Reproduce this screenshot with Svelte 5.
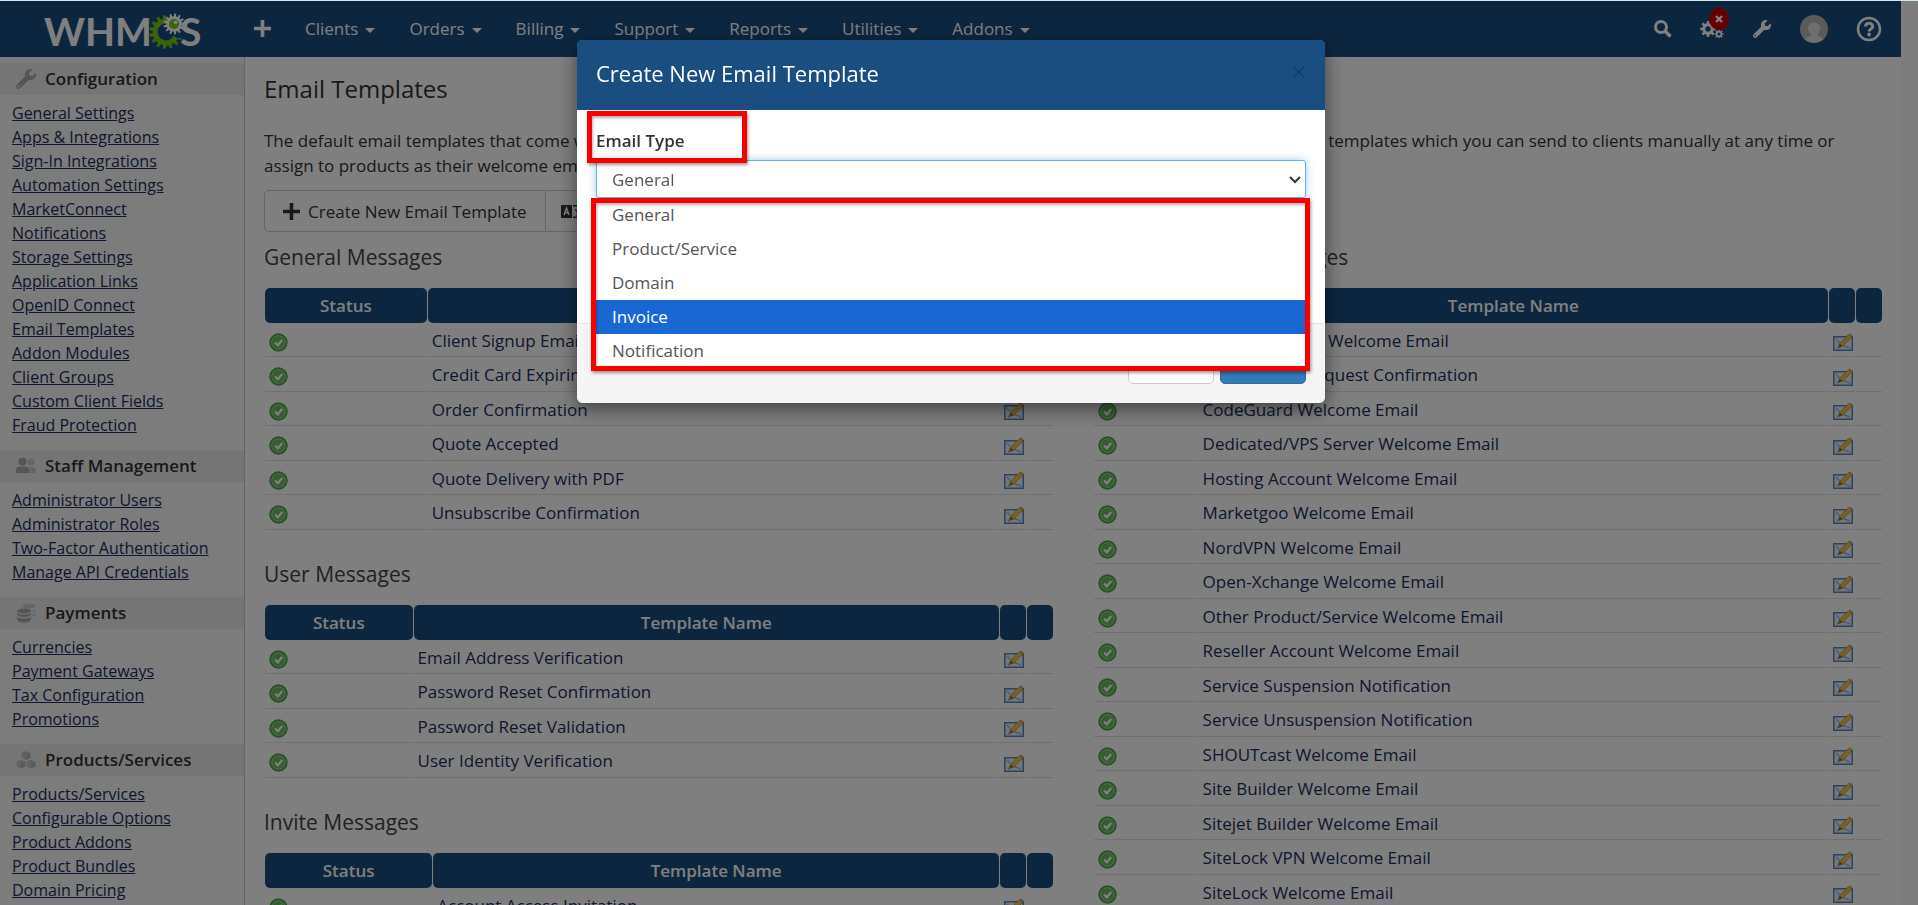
<script lang="ts">
  type IconName = 'wrench' | 'users' | 'coins' | 'cubes';

  const nav = ['Clients', 'Orders', 'Billing', 'Support', 'Reports', 'Utilities', 'Addons'];

  const sections: { title: string; icon: IconName; links: string[] }[] = [
    {
      title: 'Configuration',
      icon: 'wrench',
      links: [
        'General Settings',
        'Apps & Integrations',
        'Sign-In Integrations',
        'Automation Settings',
        'MarketConnect',
        'Notifications',
        'Storage Settings',
        'Application Links',
        'OpenID Connect',
        'Email Templates',
        'Addon Modules',
        'Client Groups',
        'Custom Client Fields',
        'Fraud Protection',
      ],
    },
    {
      title: 'Staff Management',
      icon: 'users',
      links: [
        'Administrator Users',
        'Administrator Roles',
        'Two-Factor Authentication',
        'Manage API Credentials',
      ],
    },
    {
      title: 'Payments',
      icon: 'coins',
      links: ['Currencies', 'Payment Gateways', 'Tax Configuration', 'Promotions'],
    },
    {
      title: 'Products/Services',
      icon: 'cubes',
      links: [
        'Products/Services',
        'Configurable Options',
        'Product Addons',
        'Product Bundles',
        'Domain Pricing',
      ],
    },
  ];

  // statusWidth is the share of the table taken by the status column
  const columns: { title: string; statusWidth: number; rows: string[] }[][] = [
    [
      {
        title: 'General Messages',
        statusWidth: 20.6,
        rows: [
          'Client Signup Email',
          'Credit Card Expiring Soon',
          'Order Confirmation',
          'Quote Accepted',
          'Quote Delivery with PDF',
          'Unsubscribe Confirmation',
        ],
      },
      {
        title: 'User Messages',
        statusWidth: 18.8,
        rows: [
          'Email Address Verification',
          'Password Reset Confirmation',
          'Password Reset Validation',
          'User Identity Verification',
        ],
      },
      {
        title: 'Invite Messages',
        statusWidth: 21.3,
        rows: ['Account Access Invitation', 'Admin Invitation'],
      },
    ],
    [
      {
        title: 'Product/Service Messages',
        statusWidth: 13.2,
        rows: [
          '360 Monitoring Welcome Email',
          'Cancellation Request Confirmation',
          'CodeGuard Welcome Email',
          'Dedicated/VPS Server Welcome Email',
          'Hosting Account Welcome Email',
          'Marketgoo Welcome Email',
          'NordVPN Welcome Email',
          'Open-Xchange Welcome Email',
          'Other Product/Service Welcome Email',
          'Reseller Account Welcome Email',
          'Service Suspension Notification',
          'Service Unsuspension Notification',
          'SHOUTcast Welcome Email',
          'Site Builder Welcome Email',
          'Sitejet Builder Welcome Email',
          'SiteLock VPN Welcome Email',
          'SiteLock Welcome Email',
        ],
      },
    ],
  ];

  const types = ['General', 'Product/Service', 'Domain', 'Invoice', 'Notification'];

  let selected = $state('General');
  let highlighted = $state('Invoice');

  const wrenchPath =
    'M507.7 109.1c-2.2-9-13.5-12.1-20.1-5.5l-74.4 74.4-67.9-11.3-11.3-67.9 74.4-74.4c6.6-6.6 3.4-17.9-5.7-20.2-47.4-11.7-99.6 .9-136.6 37.9-39.6 39.6-50.6 97.1-34.1 147.2L18.7 402.8c-25 25-25 65.5 0 90.5s65.5 25 90.5 0l213.2-213.2c50.1 16.7 107.5 5.7 147.4-34.2 37.1-37.1 49.7-89.3 37.9-136.8zM64 472c-13.3 0-24-10.8-24-24 0-13.3 10.7-24 24-24s24 10.7 24 24c0 13.2-10.7 24-24 24z';

  // outline of a gear centred on the origin
  function gear(teeth: number, outer: number, inner: number) {
    const step = (Math.PI * 2) / teeth;
    const points: string[] = [];
    for (let i = 0; i < teeth; i++) {
      for (const [offset, radius] of [[-0.3, inner], [-0.18, outer], [0.18, outer], [0.3, inner]]) {
        const angle = (i + offset) * step;
        points.push(`${(Math.cos(angle) * radius).toFixed(2)} ${(Math.sin(angle) * radius).toFixed(2)}`);
      }
    }
    return `M${points.join('L')}Z`;
  }
</script>

{#snippet plus()}
  <svg class="plus" viewBox="0 0 16 16" aria-hidden="true"><path d="M6.3 0h3.4v6.3H16v3.4H9.7V16H6.3V9.7H0V6.3h6.3z" /></svg>
{/snippet}

{#snippet sectionIcon(name: IconName)}
  {#if name === 'wrench'}
    <svg viewBox="0 0 512 512" aria-hidden="true"><path d={wrenchPath} /></svg>
  {:else if name === 'users'}
    <svg viewBox="0 0 20 18" aria-hidden="true">
      <g opacity="0.45">
        <circle cx="15" cy="5" r="3.5" />
        <path d="M12 16v-3q0-3 3-3h2q3 0 3 3v3z" />
      </g>
      <circle cx="6.5" cy="4.5" r="4" />
      <path d="M0 16v-3q0-3.500 3.500-3.500h6q3.500 0 3.500 3.500v3z" />
    </svg>
  {:else if name === 'coins'}
    <svg viewBox="0 0 20 20" aria-hidden="true">
      <g opacity="0.45">
        <ellipse cx="13" cy="3" rx="6.500" ry="2.500" />
        <path d="M16 8q3-.5 3.500-2v2q-.5 1.500-3.500 2zM16 12q3-.5 3.500-2v2q-.5 1.500-3.500 2z" />
      </g>
      <ellipse cx="8" cy="8" rx="7" ry="2.500" />
      <path d="M1 9.500q1 2 7 2t7-2v2q-1 2.500-7 2.500t-7-2.500zM1 13.500q1 2 7 2t7-2v3q-1 3-7 3t-7-3z" />
    </svg>
  {:else}
    <svg viewBox="0 0 20 20" aria-hidden="true">
      <g opacity="0.6">
        <path d="M10 1l4.500 2v5L10 10 5.500 8V3zM5 9.500l4.500 2v5L5 18.500l-4.500-2v-5zM15 9.500l4.500 2v5l-4.500 2-4.500-2v-5z" />
      </g>
      <path d="M10 5l4.500-2v5L10 10zM5 13.500l4.500-2v5L5 18.500zM15 13.500l4.500-2v5l-4.500 2z" opacity="0.5" />
    </svg>
  {/if}
{/snippet}

<div class="page">
  <header class="topbar">
    <a class="logo" href="#home" aria-label="WHMCS">
      <span>WHM</span>
      <svg viewBox="0 0 36 38" aria-hidden="true">
        <path class="green" fill-rule="evenodd" d="{gear(15, 16.8, 13.4)}M8.500 0a8.500 8.500 0 1 0-17 0a8.500 8.500 0 1 0 17 0z" transform="translate(18 20)" />
        <path class="bar" d="M24 12h12v14h-7l-6-4z" />
        <path class="light" d={gear(13, 10.5, 7.8)} transform="translate(26 12)" />
        <circle class="green" cx="26" cy="12" r="5" />
        <circle class="light" cx="27.500" cy="10.300" r="1.900" />
      </svg>
      <span class="last">S</span>
    </a>

    <nav>
      <a href="#add" aria-label="Add new">{@render plus()}</a>
      {#each nav as item}
        <a href="#{item.toLowerCase()}">{item}<i class="caret"></i></a>
      {/each}
    </nav>

    <div class="tools">
      <a href="#search" aria-label="Search">
        <svg width="18" height="18" viewBox="0 0 18 18"><circle cx="7" cy="7" r="5.500" fill="none" stroke="currentColor" stroke-width="3" /><path d="M11 11l5.500 5.500" stroke="currentColor" stroke-width="3.500" /></svg>
      </a>
      <a class="automation" href="#automation" aria-label="Automation status">
        <svg width="24" height="18" viewBox="0 0 24 18">
          <path fill-rule="evenodd" d="{gear(8, 8, 5.8)}M2.700 0a2.700 2.700 0 1 0-5.400 0a2.700 2.700 0 1 0 5.400 0z" transform="translate(8 9)" />
          <path fill-rule="evenodd" d="{gear(8, 4.6, 3.3)}M1.600 0a1.600 1.600 0 1 0-3.200 0a1.600 1.600 0 1 0 3.200 0z" transform="translate(19 14)" />
        </svg>
        <span class="badge"><svg width="8" height="8" viewBox="0 0 8 8"><path d="M1 1l6 6M7 1L1 7" stroke="currentColor" stroke-width="2.400" /></svg></span>
      </a>
      <a href="#setup" aria-label="Setup">
        <svg width="20" height="18" viewBox="0 0 512 512"><path d={wrenchPath} /></svg>
      </a>
      <a href="#account" aria-label="My account">
        <svg width="28" height="28" viewBox="0 0 28 28">
          <circle cx="14" cy="14" r="14" fill="#b5b5b5" />
          <path d="M14 7.500c4 0 6 3 6 6 0 3-1.500 5-3 6 0 2 5 2.500 6.500 4.500a14 14 0 0 1-19 0c1.500-2 6.500-2.500 6.500-4.500-1.500-1-3-3-3-6 0-3 2-6 6-6z" fill="#dedede" />
        </svg>
      </a>
      <a href="#help" aria-label="Help">
        <svg width="26" height="26" viewBox="0 0 26 26">
          <g fill="none" stroke="currentColor">
            <circle cx="13" cy="13" r="11" stroke-width="2.500" />
            <path d="M9.500 10.500c0-2 1.500-3.200 3.500-3.200s3.700 1.200 3.700 3.100c0 2.400-3.500 2.600-3.500 5" stroke-width="3" />
            <circle cx="13.100" cy="18.500" r="0.900" stroke-width="2" />
          </g>
        </svg>
      </a>
    </div>
  </header>

  <div class="columns">
    <aside>
      {#each sections as section}
        <section>
          <h2>{@render sectionIcon(section.icon)}{section.title}</h2>
          <ul>
            {#each section.links as link}
              <li><a href="#{link}">{link}</a></li>
            {/each}
          </ul>
        </section>
      {/each}
    </aside>

    <main>
      <h1>Email Templates</h1>
      <p>
        The default email templates that come with WHMCS are listed here and can be fully customised. You can also add your own additional templates which you can send to clients manually at any time or assign to products as their welcome email.
      </p>

      <div class="btn-group">
        <button type="button">{@render plus()}Create New Email Template</button>
        <button type="button">
          <svg width="24" height="13" viewBox="0 0 24 13" aria-hidden="true">
            <path d="M0 0h11v13H0z" />
            <path d="M3 10l2.500-7L8 10M4 7.800h3" fill="none" stroke="#fff" stroke-width="1.500" />
            <path d="M12 .8h11.200v11.400H12M17.500 2.500v2M14 5h7M15.500 10q4-2 4-5M15.500 6.500q1.500 2.500 4.500 3.500" fill="none" stroke="currentColor" stroke-width="1.500" />
          </svg>
          Manage Languages
        </button>
      </div>

      <div class="lists">
        {#each columns as groups}
          <div>
            {#each groups as group}
              <h3>{group.title}</h3>
              <table>
                <thead>
                  <tr>
                    <th style:width="{group.statusWidth}%">Status</th>
                    <th>Template Name</th>
                    <th class="action"></th>
                    <th class="action"></th>
                  </tr>
                </thead>
                <tbody>
                  {#each group.rows as row}
                    <tr>
                      <td>
                        <svg width="19" height="19" viewBox="0 0 19 19" role="img" aria-label="Active">
                          <circle cx="9.500" cy="9.500" r="9.200" fill="#4fa44a" />
                          <circle cx="9.500" cy="9.500" r="6.800" fill="#6dbb60" stroke="#a4dc98" />
                          <path d="M6 9.500l2.800 2.800L13.200 7" fill="none" stroke="#fff" stroke-width="2.200" />
                        </svg>
                      </td>
                      <td><a href="#{row}">{row}</a></td>
                      <td>
                        <a href="#edit" aria-label="Edit {row}">
                          <svg width="20" height="18" viewBox="0 0 20 18">
                            <rect x="0.750" y="3.750" width="18.500" height="13.500" fill="#e6eff8" stroke="#5687bd" stroke-width="1.500" />
                            <path d="M3 6l6 6-5 3M9 12l8 3" fill="none" stroke="#9db8d6" stroke-width="1.500" />
                            <path d="M5.500 14.500l1-4L15.500 1.500l3.500 2.500-9 9z" fill="#f2c14e" stroke="#b98a2d" stroke-width="0.700" />
                            <path d="M5.500 14.500l1-4 3 2.500z" fill="#8a6a3c" />
                            <path d="M15.500 1.500L17 .5l2.500 2-.5 1.500z" fill="#e39a6c" />
                          </svg>
                        </a>
                      </td>
                      <td></td>
                    </tr>
                  {/each}
                </tbody>
              </table>
            {/each}
          </div>
        {/each}
      </div>
    </main>
  </div>
</div>

<div class="scrollbar"></div>
<div class="backdrop"></div>

<div class="modal" role="dialog" aria-labelledby="modal-title">
  <div class="modal-header">
    <h4 id="modal-title">Create New Email Template</h4>
    <button type="button" class="close" aria-label="Close">×</button>
  </div>
  <div class="modal-body">
    <label for="email-type">Email Type</label>
    <div class="picker">
      <select id="email-type" bind:value={selected}>
        {#each types as type}
          <option>{type}</option>
        {/each}
      </select>
      <svg class="chevron" width="12" height="8" viewBox="0 0 12 8" aria-hidden="true"><path d="M1 1l5 5 5-5" /></svg>
      <ul class="options" role="listbox" aria-label="Email Type">
        {#each types as type}
          <li
            role="option"
            aria-selected={type === selected}
            class:active={type === highlighted}
            onmouseenter={() => (highlighted = type)}
          >
            {type}
          </li>
        {/each}
      </ul>
      <div class="mark mark-options"></div>
    </div>
    <div class="mark mark-label"></div>
  </div>
  <div class="modal-footer">
    <button type="button">Close</button>
    <button type="button" class="primary">Create</button>
  </div>
</div>

<style>
  :global(body) {
    height: 100vh;
    overflow: hidden;
    background: #fff;
    font-family: 'Open Sans', 'Liberation Sans', sans-serif;
    font-size: 17px;
    line-height: 25px;
    color: #333;
  }

  svg {
    display: block;
    fill: currentColor;
  }

  a {
    color: #202f60;
    text-decoration: none;
  }

  button {
    font: inherit;
    color: inherit;
  }

  ul {
    list-style: none;
    margin: 0;
    padding: 0;
  }

  .page {
    height: 100vh;
    box-sizing: border-box;
    margin-right: 17px;
    overflow: hidden;
    border-top: 1px solid #cfeaf3;
    display: flex;
    flex-direction: column;
  }

  .scrollbar {
    position: fixed;
    top: 0;
    right: 0;
    bottom: 0;
    width: 17px;
    background: #fafafa;
    border-top: 1px solid #cfeaf3;
  }

  .backdrop {
    position: fixed;
    inset: 1px 0 0;
    background: rgba(0, 0, 0, 0.5);
  }

  /* top bar */
  .topbar {
    flex: none;
    height: 56px;
    background: #1a4d80;
    display: flex;
    align-items: center;
  }

  .topbar a {
    color: #fff;
  }

  .logo {
    width: 211px;
    box-sizing: border-box;
    padding: 4px 0 0 44px;
    display: flex;
    align-items: center;
    font-family: Lato, sans-serif;
    font-size: 39px;
    font-weight: 700;
    line-height: 40px;
  }

  .logo svg {
    width: 36px;
    height: 38px;
    flex: none;
    margin-left: -4px;
  }

  .logo .last {
    margin-left: -4px;
  }

  .logo .green {
    fill: #77c41c;
  }

  .logo .bar {
    fill: #1a4d80;
  }

  .logo .light {
    fill: #fff;
  }

  nav {
    flex: 1;
    display: flex;
    align-items: center;
    gap: 34px;
    padding: 0 0 2px 43px;
  }

  nav a {
    display: flex;
    align-items: center;
    gap: 7px;
  }

  .plus {
    width: 17px;
    height: 17px;
  }

  .caret {
    border: 5px solid transparent;
    border-top-color: currentColor;
    border-bottom: 0;
    margin-top: 4px;
  }

  .tools {
    display: flex;
    align-items: center;
    gap: 28px;
    padding-right: 19px;
  }

  .automation {
    position: relative;
  }

  .badge {
    position: absolute;
    top: -12px;
    left: 9px;
    width: 20px;
    height: 22px;
    border-radius: 50%;
    background: #c00;
    display: grid;
    place-items: center;
  }

  .columns {
    flex: 1;
    min-height: 0;
    display: flex;
  }

  /* sidebar */
  aside {
    width: 244px;
    flex: none;
    padding-top: 6px;
    background: #f8f8f8;
    border-right: 1px solid #ccc;
    font-size: 16px;
    line-height: 24px;
  }

  section {
    margin-bottom: 18px;
  }

  section h2 {
    margin: 0;
    height: 32px;
    padding-left: 16px;
    background: #ebebeb;
    display: flex;
    align-items: center;
    gap: 9px;
    font-size: 17px;
    font-weight: 600;
  }

  section h2 svg {
    width: 20px;
    height: 20px;
    color: #aaa;
  }

  section ul {
    padding: 6px 12px 0;
    margin-bottom: -5px;
  }

  section a {
    text-decoration: underline;
  }

  /* content */
  main {
    flex: 1;
    min-width: 0;
    padding: 14px 18px 0 19px;
  }

  h1 {
    margin: 0 0 21px;
    font-size: 24px;
    line-height: 36px;
    font-weight: 400;
  }

  p {
    margin: 0 0 12px;
    padding-right: 24px;
  }

  .btn-group {
    display: flex;
  }

  .btn-group button {
    display: flex;
    align-items: center;
    gap: 8px;
    height: 42px;
    padding: 0 18px;
    border: 1px solid #ccc;
    background: #fff;
  }

  .btn-group button:first-child {
    border-radius: 5px 0 0 5px;
  }

  .btn-group button:last-child {
    border-left: 0;
    border-radius: 0 5px 5px 0;
    padding: 0 15px;
  }

  .lists {
    display: grid;
    grid-template-columns: 1fr 1fr;
    gap: 39px;
  }

  h3 {
    margin: 10px 0 16px;
    font-size: 21px;
    line-height: 30px;
    font-weight: 400;
    color: #444;
  }

  table {
    width: 100%;
    table-layout: fixed;
    border-collapse: separate;
    border-spacing: 1px 0;
    margin-bottom: 29px;
  }

  th {
    height: 35px;
    padding: 0;
    background: #1a4d80;
    border-radius: 5px;
    color: #fff;
    font-weight: 600;
  }

  .action {
    width: 26px;
  }

  td {
    height: 34px;
    box-sizing: border-box;
    padding: 1px 4px 0;
    border-bottom: 1px solid #e0e0e0;
  }

  tbody tr:nth-child(even) td {
    height: 35px;
  }

  td svg {
    margin-top: 4px;
  }

  /* dialog */
  .modal {
    position: fixed;
    top: 40px;
    left: 50%;
    width: 748px;
    margin-left: -382px;
    border-radius: 6px;
    background: #fff;
    box-shadow: 0 6px 19px rgba(0, 0, 0, 0.5);
  }

  .modal-header {
    height: 70px;
    padding: 0 19px 4px;
    box-sizing: border-box;
    border-radius: 5px 5px 0 0;
    background: #1a4d80;
    color: #fff;
    display: flex;
    align-items: center;
    justify-content: space-between;
  }

  h4 {
    margin: 0;
    font-size: 22px;
    font-weight: 500;
  }

  .close {
    border: 0;
    padding: 0 0 4px;
    background: none;
    font-size: 26px;
    line-height: 26px;
    color: #153f69;
  }

  .modal-body {
    position: relative;
    height: 213px;
    box-sizing: border-box;
    padding: 18px 19px;
  }

  label {
    display: block;
    margin-bottom: 7px;
    font-weight: 600;
  }

  .picker {
    position: relative;
  }

  select {
    display: block;
    width: 100%;
    height: 38px;
    padding: 0 15px;
    appearance: none;
    border: 1px solid #66afe9;
    border-radius: 3px;
    outline: 0;
    background: #fff;
    box-shadow: 0 0 9px rgba(102, 175, 233, 0.6);
    font: inherit;
    color: #555;
  }

  .chevron {
    position: absolute;
    top: 16px;
    right: 5px;
  }

  .chevron path {
    fill: none;
    stroke: #333;
    stroke-width: 2;
  }

  .options {
    position: absolute;
    z-index: 1;
    top: 38px;
    left: 0;
    right: 0;
    background: #fff;
    color: #555;
  }

  .options li {
    padding: 0 16px;
    line-height: 34px;
  }

  .options .active {
    background: #1967d2;
    color: #fff;
  }

  .mark {
    position: absolute;
    box-sizing: border-box;
    border: 5px solid #f90000;
    box-shadow: 1px 2px 3px rgba(0, 0, 0, 0.4), inset 1px 2px 3px rgba(0, 0, 0, 0.3);
    pointer-events: none;
  }

  .mark-options {
    z-index: 2;
    top: 38px;
    left: -5px;
    right: -4px;
    height: 173px;
  }

  .mark-label {
    top: 1px;
    left: 10px;
    width: 160px;
    height: 52px;
  }

  .modal-footer {
    display: flex;
    justify-content: flex-end;
    gap: 6px;
    padding: 18px 19px 19px;
    border-top: 1px solid #e5e5e5;
    border-radius: 0 0 6px 6px;
    background: #f5f5f5;
  }

  .modal-footer button {
    width: 86px;
    height: 42px;
    border: 1px solid #ccc;
    border-radius: 5px;
    background: #fff;
  }

  .modal-footer .primary {
    border-color: #2e6da4;
    background: #337ab7;
    color: #fff;
  }
</style>
